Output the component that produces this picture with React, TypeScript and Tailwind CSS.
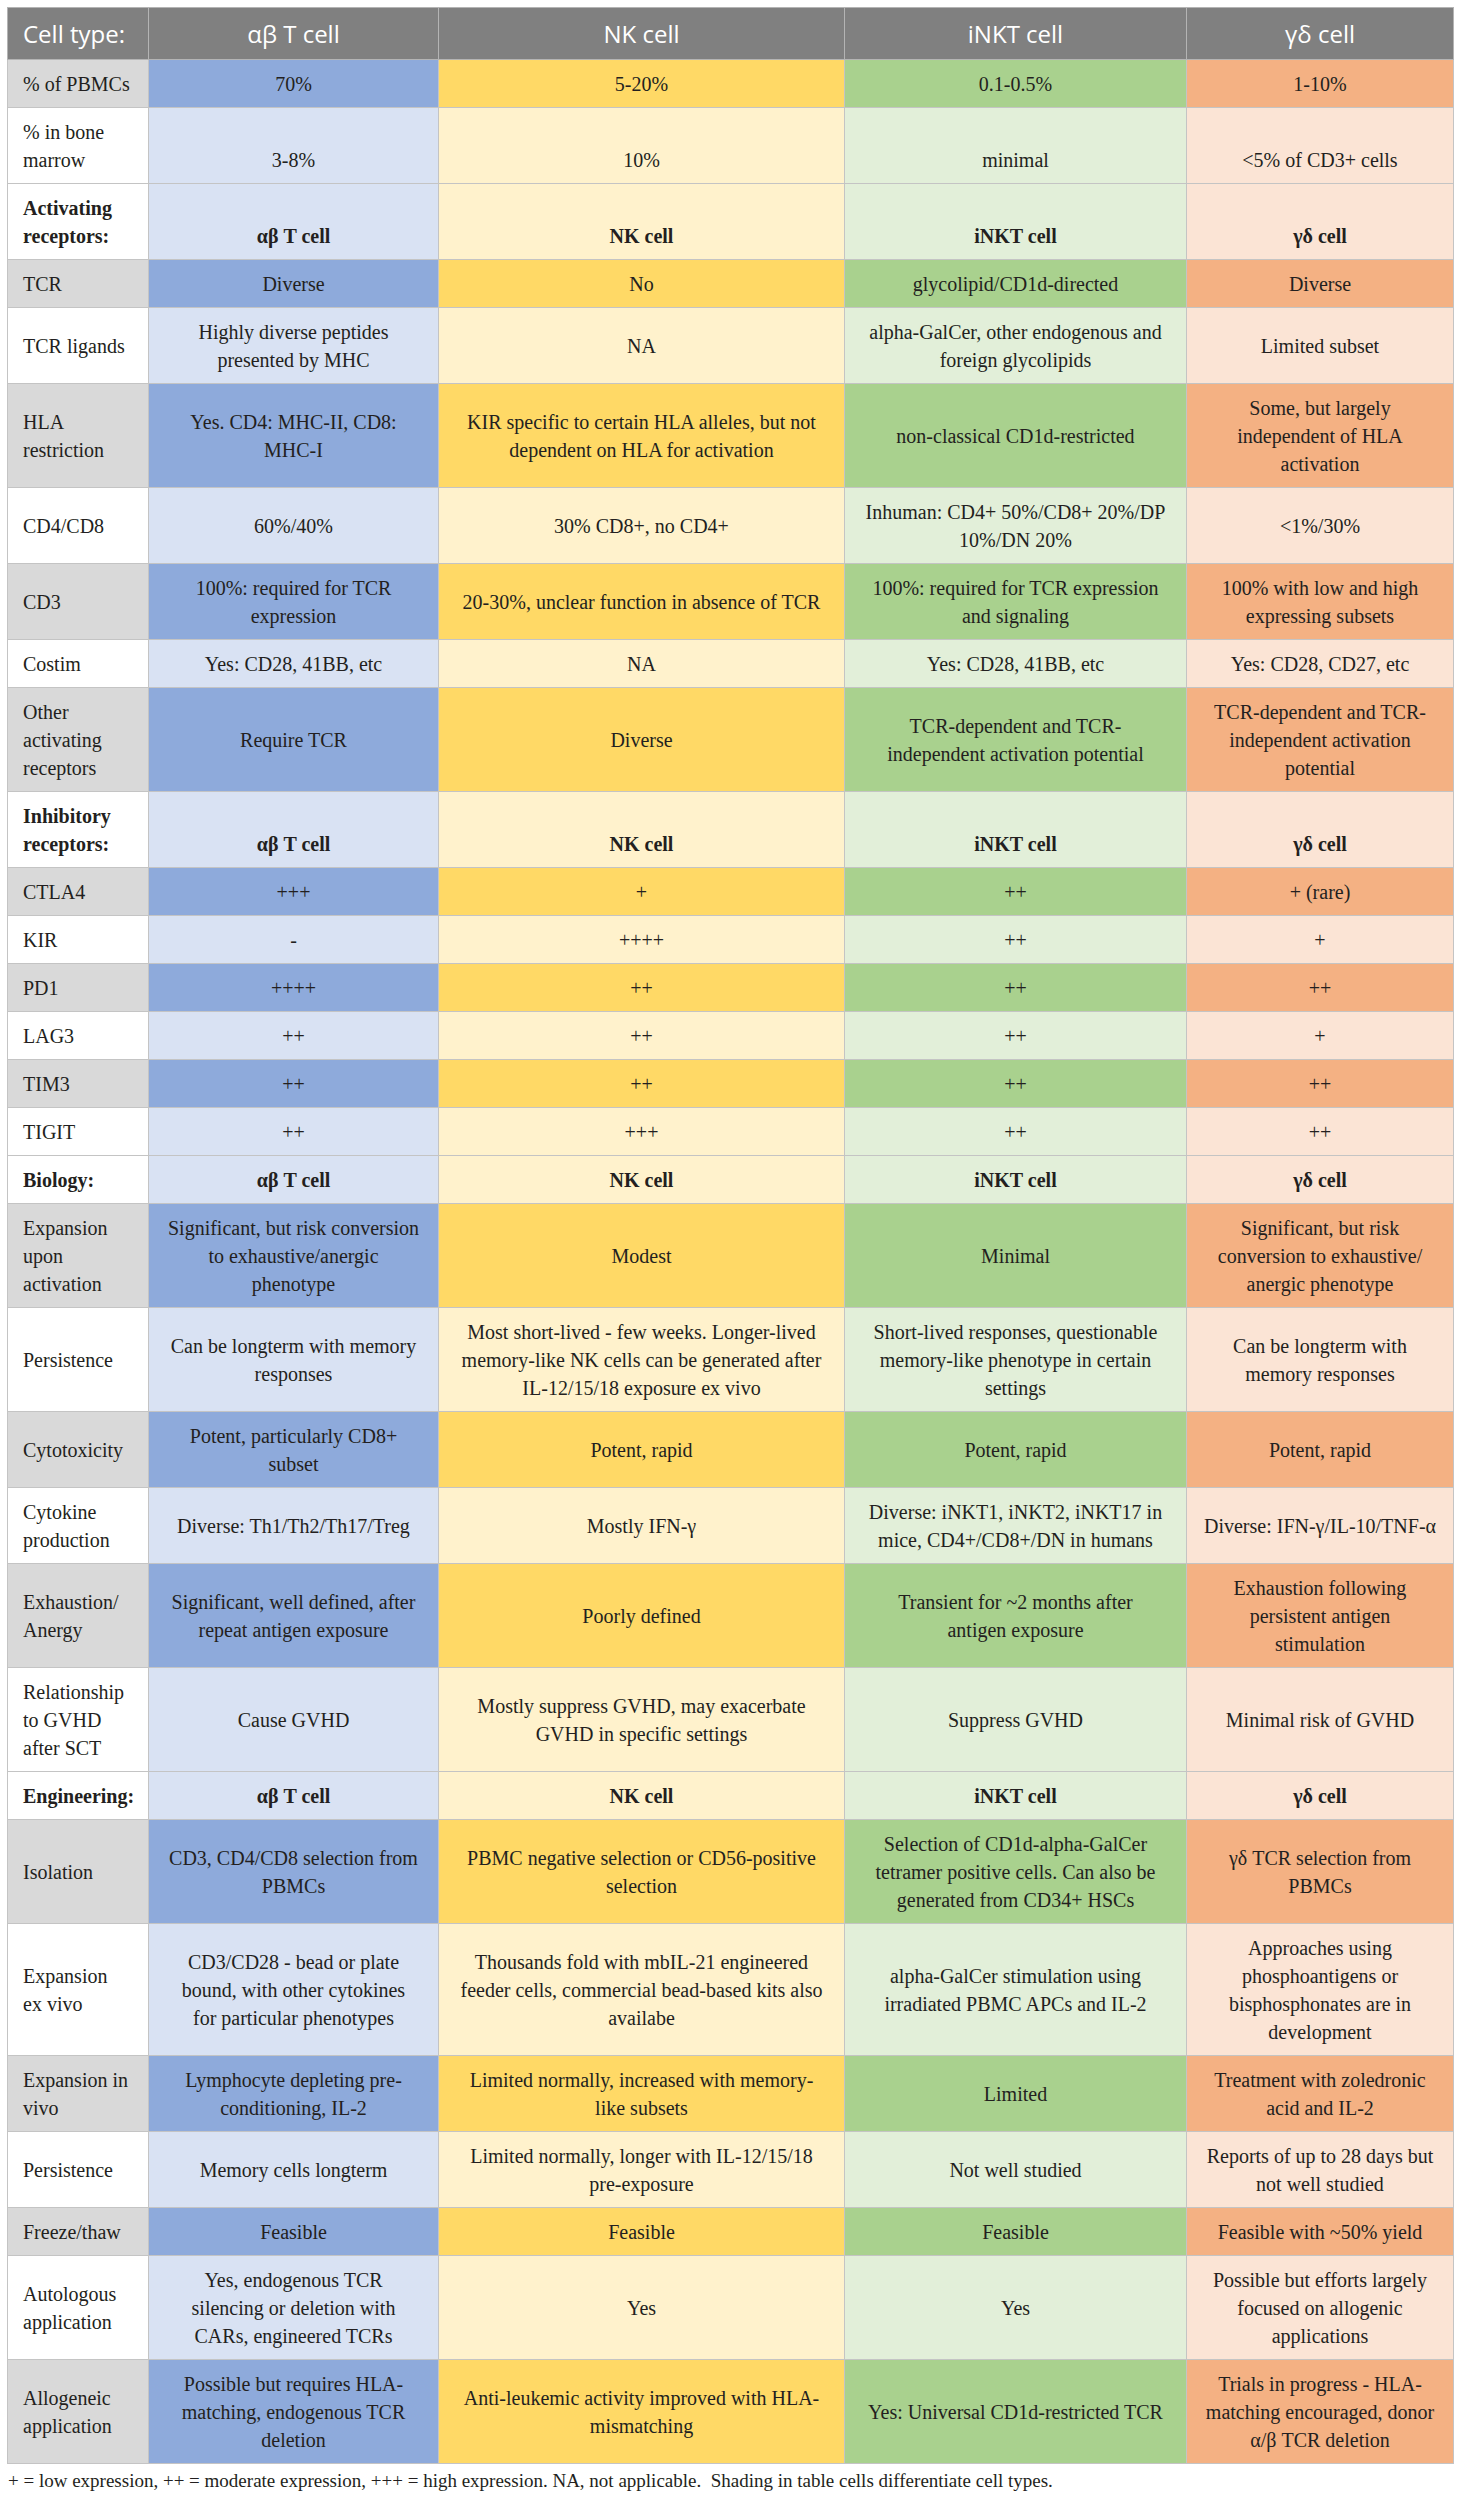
import React from "react";

type Row = {
  label: string;
  cells: string[];
  dark?: boolean;
  bold?: boolean;
  bottom?: boolean;
};

const darkBg = ["bg-[#8eaadb]", "bg-[#ffd966]", "bg-[#a9d18e]", "bg-[#f4b183]"];
const lightBg = ["bg-[#d9e2f3]", "bg-[#fff2cc]", "bg-[#e2efd9]", "bg-[#fbe4d5]"];

const typeNames = ["αβ T cell", "NK cell", "iNKT cell", "γδ cell"];

const rows: Row[] = [
  { label: "% of PBMCs", cells: ["70%", "5-20%", "0.1-0.5%", "1-10%"], dark: true },
  { label: "% in bone\nmarrow", cells: ["3-8%", "10%", "minimal", "<5% of CD3+ cells"], bottom: true },
  { label: "Activating\nreceptors:", cells: typeNames, bold: true, bottom: true },
  { label: "TCR", cells: ["Diverse", "No", "glycolipid/CD1d-directed", "Diverse"], dark: true },
  {
    label: "TCR ligands",
    cells: [
      "Highly diverse peptides\npresented by MHC",
      "NA",
      "alpha-GalCer, other endogenous and\nforeign glycolipids",
      "Limited subset",
    ],
  },
  {
    label: "HLA\nrestriction",
    cells: [
      "Yes. CD4: MHC-II, CD8:\nMHC-I",
      "KIR specific to certain HLA alleles, but not\ndependent on HLA for activation",
      "non-classical CD1d-restricted",
      "Some, but largely\nindependent of HLA\nactivation",
    ],
    dark: true,
  },
  {
    label: "CD4/CD8",
    cells: ["60%/40%", "30% CD8+, no CD4+", "Inhuman: CD4+ 50%/CD8+ 20%/DP\n10%/DN 20%", "<1%/30%"],
  },
  {
    label: "CD3",
    cells: [
      "100%: required for TCR\nexpression",
      "20-30%, unclear function in absence of TCR",
      "100%: required for TCR expression\nand signaling",
      "100% with low and high\nexpressing subsets",
    ],
    dark: true,
  },
  {
    label: "Costim",
    cells: ["Yes: CD28, 41BB, etc", "NA", "Yes: CD28, 41BB, etc", "Yes: CD28, CD27, etc"],
  },
  {
    label: "Other\nactivating\nreceptors",
    cells: [
      "Require TCR",
      "Diverse",
      "TCR-dependent and TCR-\nindependent activation potential",
      "TCR-dependent and TCR-\nindependent activation\npotential",
    ],
    dark: true,
  },
  { label: "Inhibitory\nreceptors:", cells: typeNames, bold: true, bottom: true },
  { label: "CTLA4", cells: ["+++", "+", "++", "+ (rare)"], dark: true },
  { label: "KIR", cells: ["-", "++++", "++", "+"] },
  { label: "PD1", cells: ["++++", "++", "++", "++"], dark: true },
  { label: "LAG3", cells: ["++", "++", "++", "+"] },
  { label: "TIM3", cells: ["++", "++", "++", "++"], dark: true },
  { label: "TIGIT", cells: ["++", "+++", "++", "++"] },
  { label: "Biology:", cells: typeNames, bold: true },
  {
    label: "Expansion\nupon\nactivation",
    cells: [
      "Significant, but risk conversion\nto exhaustive/anergic\nphenotype",
      "Modest",
      "Minimal",
      "Significant, but risk\nconversion to exhaustive/\nanergic phenotype",
    ],
    dark: true,
  },
  {
    label: "Persistence",
    cells: [
      "Can be longterm with memory\nresponses",
      "Most short-lived - few weeks. Longer-lived\nmemory-like NK cells can be generated after\nIL-12/15/18 exposure ex vivo",
      "Short-lived responses, questionable\nmemory-like phenotype in certain\nsettings",
      "Can be longterm with\nmemory responses",
    ],
  },
  {
    label: "Cytotoxicity",
    cells: ["Potent, particularly CD8+\nsubset", "Potent, rapid", "Potent, rapid", "Potent, rapid"],
    dark: true,
  },
  {
    label: "Cytokine\nproduction",
    cells: [
      "Diverse: Th1/Th2/Th17/Treg",
      "Mostly IFN-γ",
      "Diverse: iNKT1, iNKT2, iNKT17 in\nmice, CD4+/CD8+/DN in humans",
      "Diverse: IFN-γ/IL-10/TNF-α",
    ],
  },
  {
    label: "Exhaustion/\nAnergy",
    cells: [
      "Significant, well defined, after\nrepeat antigen exposure",
      "Poorly defined",
      "Transient for ~2 months after\nantigen exposure",
      "Exhaustion following\npersistent antigen\nstimulation",
    ],
    dark: true,
  },
  {
    label: "Relationship\nto GVHD\nafter SCT",
    cells: [
      "Cause GVHD",
      "Mostly suppress GVHD, may exacerbate\nGVHD in specific settings",
      "Suppress GVHD",
      "Minimal risk of GVHD",
    ],
  },
  { label: "Engineering:", cells: typeNames, bold: true },
  {
    label: "Isolation",
    cells: [
      "CD3, CD4/CD8 selection from\nPBMCs",
      "PBMC negative selection or CD56-positive\nselection",
      "Selection of CD1d-alpha-GalCer\ntetramer positive cells. Can also be\ngenerated from CD34+ HSCs",
      "γδ TCR selection from\nPBMCs",
    ],
    dark: true,
  },
  {
    label: "Expansion\nex vivo",
    cells: [
      "CD3/CD28 - bead or plate\nbound, with other cytokines\nfor particular phenotypes",
      "Thousands fold with mbIL-21 engineered\nfeeder cells, commercial bead-based kits also\navailabe",
      "alpha-GalCer stimulation using\nirradiated PBMC APCs and IL-2",
      "Approaches using\nphosphoantigens or\nbisphosphonates are in\ndevelopment",
    ],
  },
  {
    label: "Expansion in\nvivo",
    cells: [
      "Lymphocyte depleting pre-\nconditioning, IL-2",
      "Limited normally, increased with memory-\nlike subsets",
      "Limited",
      "Treatment with zoledronic\nacid and IL-2",
    ],
    dark: true,
  },
  {
    label: "Persistence",
    cells: [
      "Memory cells longterm",
      "Limited normally, longer with IL-12/15/18\npre-exposure",
      "Not well studied",
      "Reports of up to 28 days but\nnot well studied",
    ],
  },
  {
    label: "Freeze/thaw",
    cells: ["Feasible", "Feasible", "Feasible", "Feasible with ~50% yield"],
    dark: true,
  },
  {
    label: "Autologous\napplication",
    cells: [
      "Yes, endogenous TCR\nsilencing or deletion with\nCARs, engineered TCRs",
      "Yes",
      "Yes",
      "Possible but efforts largely\nfocused on allogenic\napplications",
    ],
  },
  {
    label: "Allogeneic\napplication",
    cells: [
      "Possible but requires HLA-\nmatching, endogenous TCR\ndeletion",
      "Anti-leukemic activity improved with HLA-\nmismatching",
      "Yes: Universal CD1d-restricted TCR",
      "Trials in progress - HLA-\nmatching encouraged, donor\nα/β TCR deletion",
    ],
    dark: true,
  },
];

const Lines = ({ text }: { text: string }) => (
  <>
    {text.split("\n").map((line, i) => (
      <span key={i} className="block whitespace-nowrap">
        {line}
      </span>
    ))}
  </>
);

export default function App() {
  return (
    <div className="bg-white w-[1460px] min-h-[2496px] pt-[7px] pl-[7px] font-['Liberation_Serif',serif] text-[#231f20]">
      <table className="table-fixed border-collapse w-[1446px] text-[20px] leading-[28px]">
        <colgroup>
          <col className="w-[141px]" />
          <col className="w-[290px]" />
          <col className="w-[406px]" />
          <col className="w-[342px]" />
          <col className="w-[267px]" />
        </colgroup>
        <thead>
          <tr className="bg-[#808080] text-white font-['Open_Sans',sans-serif] text-[24px] leading-[32px]">
            <th className="border border-[#b4b4b4] pl-[15px] pt-[10px] pb-[9px] text-left font-normal">
              Cell type:
            </th>
            {typeNames.map((name) => (
              <th key={name} className="border border-[#b4b4b4] pt-[10px] pb-[9px] text-center font-normal">
                {name}
              </th>
            ))}
          </tr>
        </thead>
        <tbody>
          {rows.map((row, ri) => (
            <tr key={ri} className={row.bold ? "font-bold" : ""}>
              <td
                className={`border border-[#c4c4c4] pl-[15px] pr-1 pt-[10px] pb-[9px] align-middle text-left ${
                  row.dark ? "bg-[#d9d9d9]" : "bg-white"
                }`}
              >
                <Lines text={row.label} />
              </td>
              {row.cells.map((cell, ci) => (
                <td
                  key={ci}
                  className={`border border-[#c4c4c4] px-1 pt-[10px] pb-[9px] text-center ${
                    row.bottom ? "align-bottom" : "align-middle"
                  } ${row.dark ? darkBg[ci] : lightBg[ci]}`}
                >
                  <Lines text={cell} />
                </td>
              ))}
            </tr>
          ))}
        </tbody>
      </table>
      <p className="mt-[5px] pl-[1px] text-[19px] leading-[24px]">
        + = low expression, ++ = moderate expression, +++ = high expression. NA, not applicable.{"\u00a0 "}Shading in
        table cells differentiate cell types.
      </p>
    </div>
  );
}
